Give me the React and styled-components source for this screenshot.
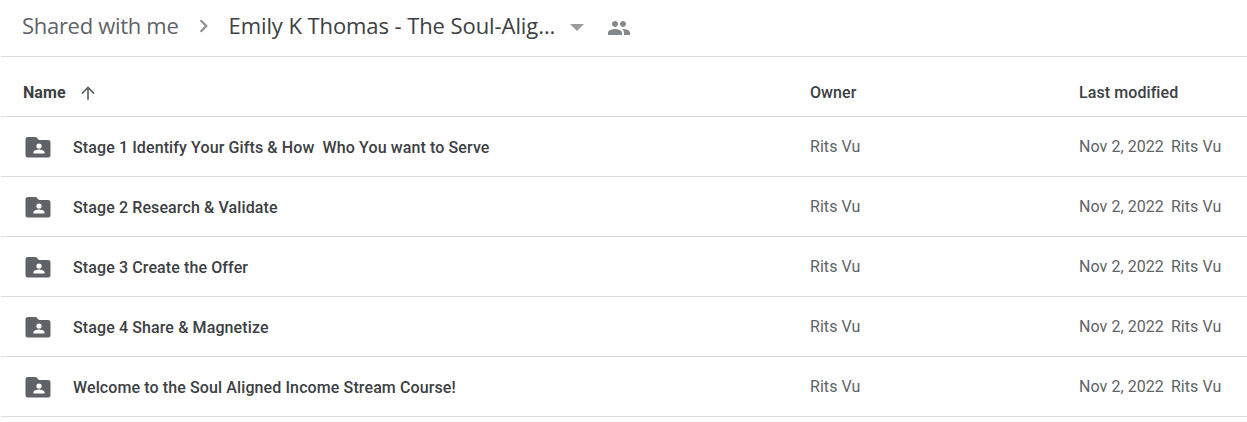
import styled, { createGlobalStyle } from "styled-components";

const folders = [
  "Stage 1 Identify Your Gifts & How  Who You want to Serve",
  "Stage 2 Research & Validate",
  "Stage 3 Create the Offer",
  "Stage 4 Share & Magnetize",
  "Welcome to the Soul Aligned Income Stream Course!",
];

export default function App() {
  return (
    <Page>
      <GlobalStyle />
      <Breadcrumbs>
        <Crumb>Shared with me</Crumb>
        <ChevronIcon viewBox="0 0 24 24">
          <path d="M9.4 5.500 7.800 7.100 12.700 12l-4.900 4.900 1.600 1.600 6.500-6.500z" />
        </ChevronIcon>
        <Crumb $current>Emily K Thomas - The Soul-Alig...</Crumb>
        <Caret />
        <PeopleIcon viewBox="0 0 24 24">
          <path d="M16 11c1.66 0 2.99-1.34 2.99-3S17.66 5 16 5s-3 1.34-3 3 1.34 3 3 3zm-8 0c1.66 0 2.99-1.34 2.99-3S9.66 5 8 5 5 6.34 5 8s1.34 3 3 3zm0 2c-2.33 0-7 1.17-7 3.5V19h14v-2.5C15 14.17 10.33 13 8 13zm8 0c-.29 0-.62.02-.97.05 1.16.84 1.97 1.97 1.97 3.45V19h6v-2.5c0-2.33-4.67-3.5-7-3.5z" />
        </PeopleIcon>
      </Breadcrumbs>
      <HeaderRow>
        <NameHeader>
          Name
          <ArrowIcon viewBox="0 0 24 24">
            <path d="M4 12l1.41 1.41L11 7.83V20h2V7.83l5.58 5.59L20 12l-8-8-8 8z" />
          </ArrowIcon>
        </NameHeader>
        <HeaderCell>Owner</HeaderCell>
        <HeaderCell>Last modified</HeaderCell>
      </HeaderRow>
      {folders.map((name) => (
        <Row key={name}>
          <NameCell>
            <FolderIcon viewBox="0 0 26 22">
              <path d="M3 1h8l3 3h9a2.500 2.500 0 0 1 2.500 2.500V19a2.500 2.500 0 0 1-2.500 2.500H3A2.500 2.500 0 0 1 .5 19V3.500A2.500 2.500 0 0 1 3 1z" />
              <circle cx="14" cy="10" r="2.600" fill="#fff" />
              <path d="M8.500 17.500v-1.200c0-1.900 3.700-2.800 5.500-2.800s5.500.9 5.500 2.800v1.200z" fill="#fff" />
            </FolderIcon>
            <FolderName>{name}</FolderName>
          </NameCell>
          <MutedCell>Rits Vu</MutedCell>
          <Modified>
            <span>Nov 2, 2022</span>
            <span>Rits Vu</span>
          </Modified>
        </Row>
      ))}
    </Page>
  );
}

const GlobalStyle = createGlobalStyle`
  body {
    margin: 0;
    background: #fff;
    font-family: Roboto, "Liberation Sans", sans-serif;
  }
`;

const Page = styled.div`
  width: 1247px;
  height: 422px;
  overflow: hidden;
  background: #fff;
`;

const Breadcrumbs = styled.div`
  height: 50px;
  margin-left: 1px;
  padding: 0 0 6px 21px;
  display: flex;
  align-items: center;
  border-bottom: 1px solid #dadce0;
`;

const Crumb = styled.span`
  font-family: "Open Sans", Roboto, sans-serif;
  font-size: 22px;
  letter-spacing: ${(props) => (props.$current ? "-0.08px" : "-0.3px")};
  color: ${(props) => (props.$current ? "#3c4043" : "#5f6368")};
  white-space: nowrap;
`;

const ChevronIcon = styled.svg`
  width: 24px;
  height: 24px;
  margin: 2px 12px 0 14px;
  fill: #8f9194;
`;

const Caret = styled.span`
  width: 0;
  height: 0;
  margin: 5px 0 0 15px;
  border-left: 7px solid transparent;
  border-right: 7px solid transparent;
  border-top: 7px solid #9a9c9f;
`;

const PeopleIcon = styled.svg`
  width: 24px;
  height: 24px;
  margin: 5px 0 0 23px;
  fill: #85888b;
`;

const columns = `
  display: grid;
  grid-template-columns: 809px 269px 1fr;
  margin-left: 1px;
  border-bottom: 1px solid #dadce0;
`;

const HeaderRow = styled.div`
  ${columns}
  height: 49px;
  padding-top: 10px;
  align-items: center;
`;

const HeaderCell = styled.div`
  padding-top: 2px;
  font-size: 16px;
  font-weight: 500;
  letter-spacing: 0.08px;
  color: #3c4043;
`;

const NameHeader = styled(HeaderCell)`
  padding-left: 22px;
  display: flex;
  align-items: center;
  font-weight: 700;
`;

const ArrowIcon = styled.svg`
  width: 20px;
  height: 20px;
  margin-left: 12px;
  fill: #5f6368;
`;

const Row = styled.div`
  ${columns}
  height: 59px;
  align-items: center;
`;

const NameCell = styled.div`
  padding-left: 24px;
  display: flex;
  align-items: center;
`;

const FolderIcon = styled.svg`
  width: 26px;
  height: 22px;
  flex: none;
  fill: #5f6368;
`;

const FolderName = styled.span`
  margin-left: 22px;
  padding-top: 2px;
  font-size: 16px;
  font-weight: 500;
  letter-spacing: 0.11px;
  color: #3c4043;
  white-space: pre;
`;

const MutedCell = styled.div`
  font-size: 16px;
  letter-spacing: 0.06px;
  color: #5f6368;
`;

const Modified = styled(MutedCell)`
  display: flex;
  gap: 7px;
  white-space: nowrap;
`;
